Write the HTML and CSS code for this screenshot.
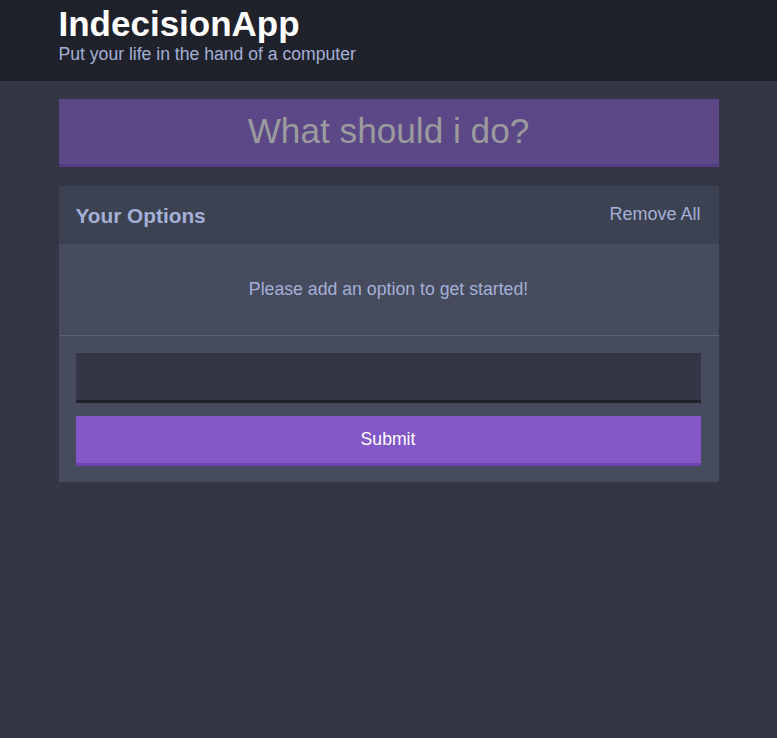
FILE: index.html
```html
<!DOCTYPE html>
<html>
<head>
<meta charset="utf-8">
<link rel="stylesheet" href="styles.css">
</head>
<body>
<header class="header">
  <div class="container">
    <h1 class="header__title">IndecisionApp</h1>
    <h2 class="header__subtitle">Put your life in the hand of a computer</h2>
  </div>
</header>
<main class="container">
  <button class="big-button" disabled>What should i do?</button>
  <section class="widget">
    <div class="widget-header">
      <h3 class="widget-header__title">Your Options</h3>
      <button class="button--link">Remove All</button>
    </div>
    <p class="widget__message">Please add an option to get started!</p>
    <form class="add-option">
      <input class="add-option__input" type="text" name="option">
      <button class="button" type="button">Submit</button>
    </form>
  </section>
</main>
</body>
</html>
```
FILE: styles.css
```css
* { box-sizing: border-box; }
html, body { margin: 0; padding: 0; }
body {
  background: #333745;
  font-family: "Liberation Sans", Arial, Helvetica, sans-serif;
  color: #fff;
  min-height: 738px;
}
.container {
  width: 660px;
  margin: 0 auto;
}
.header {
  background: #20222b;
  padding: 5px 0 16px;
}
.header__title {
  margin: 0;
  font-size: 35px;
  line-height: 38px;
  font-weight: bold;
  color: #fff;
}
.header__subtitle {
  margin: 0;
  font-size: 17.6px;
  line-height: 22px;
  font-weight: normal;
  color: #a5afd7;
}
.big-button {
  display: block;
  width: 100%;
  margin: 18px 0 19px;
  height: 68px;
  background: #5d4887;
  border: none;
  border-bottom: 3px solid #533d80;
  color: #9b9b9e;
  font-family: inherit;
  font-size: 35.2px;
  padding: 0 0 1px;
}
.widget {
  background: #464b5e;
  margin-bottom: 20px;
}
.widget-header {
  background: #3c4251;
  height: 58px;
  padding: 0 18px 0 17px;
  display: flex;
  align-items: center;
  justify-content: space-between;
}
.widget-header__title {
  margin: 0;
  padding-top: 2px;
  font-size: 20.8px;
  font-weight: bold;
  color: #a5afd7;
}
.button--link {
  background: none;
  border: none;
  padding: 0;
  margin-top: -1px;
  font-family: inherit;
  font-size: 18px;
  color: #a5afd7;
}
.widget__message {
  margin: 0;
  height: 92px;
  border-bottom: 1px solid #5d6279;
  color: #a5afd7;
  font-size: 17.7px;
  text-align: center;
  padding-top: 35px;
}
.add-option {
  padding: 17px 18px 16px 17px;
  display: flex;
  flex-direction: column;
  gap: 13px;
}
.add-option__input {
  display: block;
  width: 100%;
  height: 50px;
  background: #333745;
  border: none;
  border-bottom: 3px solid #20222b;
  color: #a5afd7;
  font-family: inherit;
  font-size: 17px;
  padding: 0 12px;
  outline: none;
}
.button {
  display: block;
  width: 100%;
  height: 50px;
  background: #8357c5;
  border: none;
  border-bottom: 3px solid #6f43b0;
  color: #fff;
  font-family: inherit;
  font-size: 17.6px;
  padding: 0 0 1px;
}
```
